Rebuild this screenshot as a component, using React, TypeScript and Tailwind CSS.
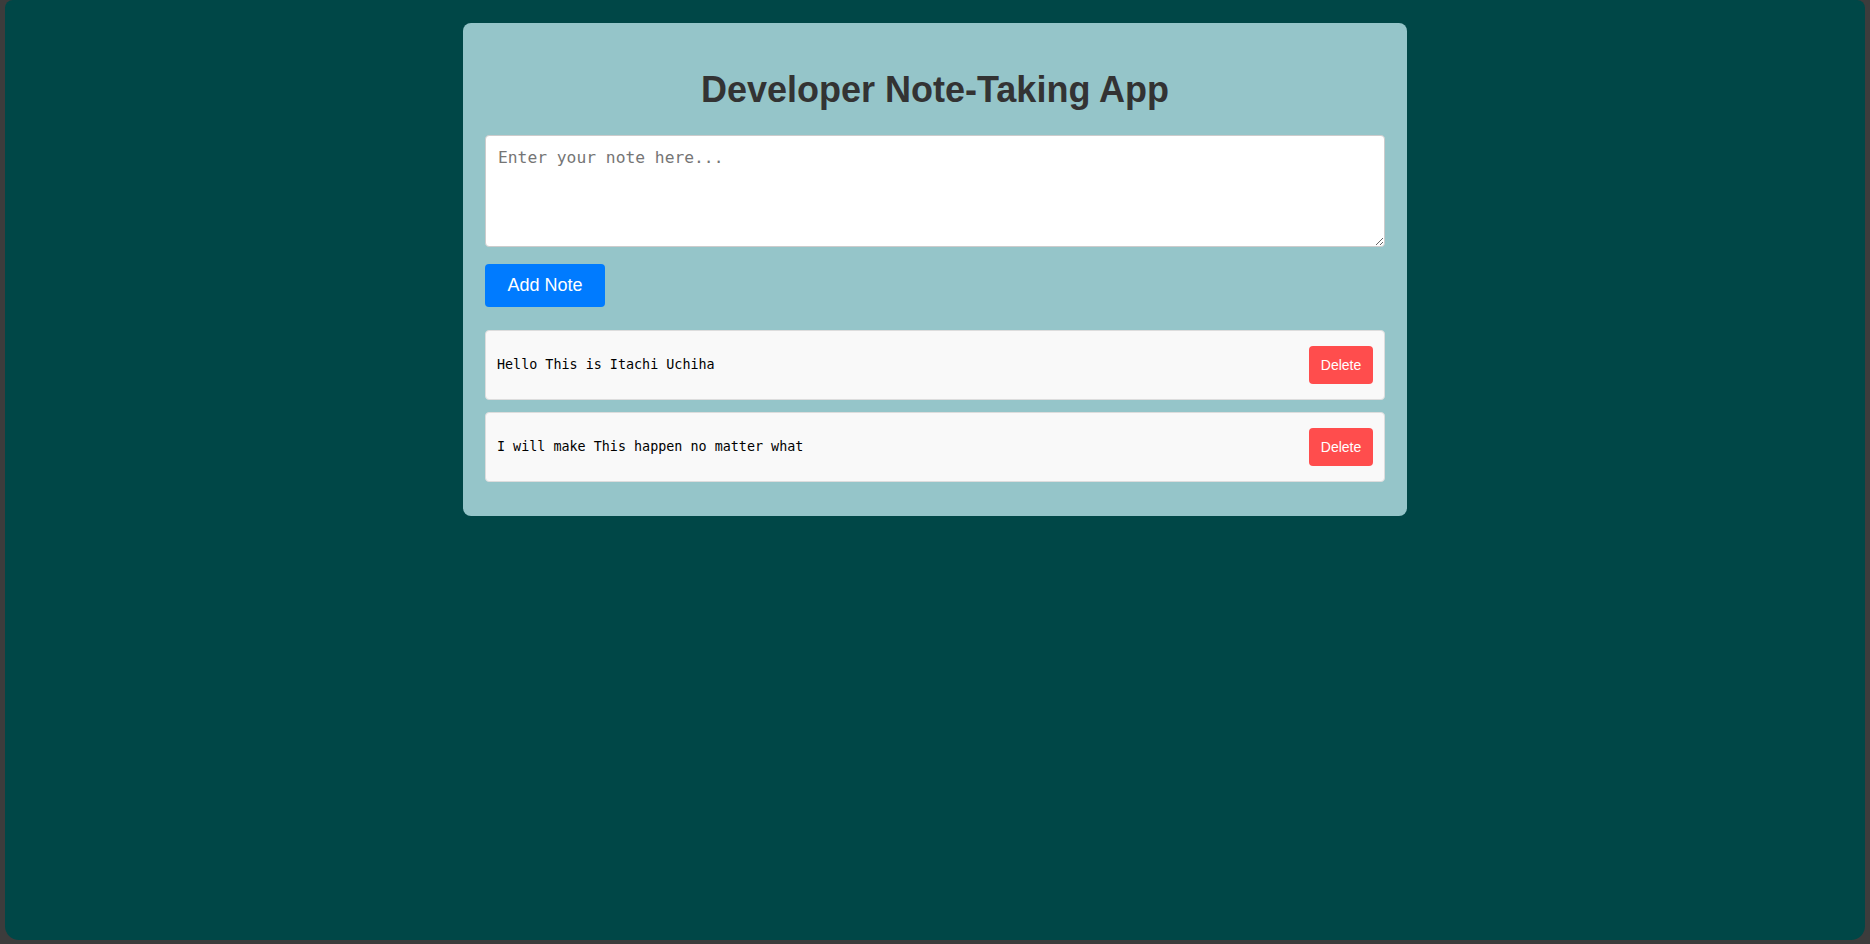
import { useState } from "react";

type Note = { id: number; text: string };

const initialNotes: Note[] = [
  { id: 1, text: "Hello This is Itachi Uchiha" },
  { id: 2, text: "I will make This happen no matter what" },
];

export default function App() {
  const [notes, setNotes] = useState<Note[]>(initialNotes);
  const [draft, setDraft] = useState("");

  const addNote = () => {
    if (!draft.trim()) return;
    setNotes([...notes, { id: Date.now(), text: draft }]);
    setDraft("");
  };

  return (
    <div className="h-screen bg-[#3c3c3c] px-[5px] pb-[4px]">
      <div className="h-full overflow-hidden rounded-b-[14px] rounded-t-[8px] bg-[#004747] pt-[23px]">
        <div className="mx-auto w-[944px] rounded-[8px] bg-[#95c5c9] px-[22px] pt-[22px] pb-[34px] font-['Liberation_Sans',Arial,sans-serif]">
          <h1 className="mt-[25px] mb-[25px] text-center text-[36px] leading-[40px] font-bold text-[#333]">
            Developer Note-Taking App
          </h1>

          <textarea
            value={draft}
            onChange={(e) => setDraft(e.target.value)}
            placeholder="Enter your note here..."
            className="block h-[112px] w-full rounded-[4px] border border-[#ccc] bg-white px-[12px] py-[10px] font-['DejaVu_Sans_Mono',monospace] text-[16.3px] text-[#222] outline-none placeholder:text-[#757575]"
          />

          <button
            onClick={addNote}
            className="mt-[17px] h-[43px] w-[120px] rounded-[4px] bg-[#007bff] text-[18px] text-white"
          >
            Add Note
          </button>

          <ul className="mt-[23px] flex flex-col gap-[12px]">
            {notes.map((note) => (
              <li
                key={note.id}
                className="flex h-[70px] items-center justify-between rounded-[4px] border border-[#ddd] bg-[#f9f9f9] pr-[11px] pl-[11px]"
              >
                <span className="font-['DejaVu_Sans_Mono',monospace] text-[13.4px] text-black">
                  {note.text}
                </span>
                <button
                  onClick={() => setNotes(notes.filter((n) => n.id !== note.id))}
                  className="h-[38px] w-[64px] rounded-[4px] bg-[#ff4d4d] text-[14px] text-white"
                >
                  Delete
                </button>
              </li>
            ))}
          </ul>
        </div>
      </div>
    </div>
  );
}
